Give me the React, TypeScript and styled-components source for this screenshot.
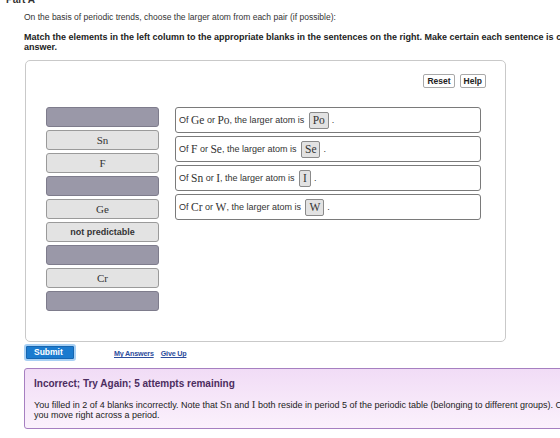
// App.tsx

import styled, { createGlobalStyle } from "styled-components";

const GlobalStyle = createGlobalStyle`
  html, body {
    margin: 0;
    padding: 0;
    background: #ffffff;
    overflow: hidden;
  }
  body {
    font-family: "Liberation Sans", Arial, sans-serif;
    color: #222;
  }
`;

const Page = styled.div`
  width: 560px;
  height: 438px;
  overflow: hidden;
  position: relative;
`;

const PartTitle = styled.div`
  margin-top: -6px;
  padding-left: 6px;
  font-size: 10px;
  line-height: 11px;
  font-weight: bold;
  color: #333;
`;

const Content = styled.div`
  padding-left: 24px;
`;

const Intro = styled.p`
  margin: 7px 0 0;
  font-size: 8.5px;
  line-height: 10px;
  color: #333;
  white-space: nowrap;
`;

const Instructions = styled.p`
  margin: 10px 0 0;
  font-size: 9px;
  line-height: 10px;
  font-weight: bold;
  color: #222;
  white-space: nowrap;
`;

const Panel = styled.div`
  margin-top: 8px;
  margin-left: 1px;
  width: 479px;
  height: 280px;
  border: 1px solid #c9c9c9;
  border-radius: 5px;
  box-sizing: content-box;
`;

const Toolbar = styled.div`
  display: flex;
  justify-content: flex-end;
  gap: 5px;
  padding: 13px 19px 0 0;
`;

const ToolButton = styled.button`
  height: 14px;
  padding: 0 3px;
  border: 1px solid #a9a9a9;
  border-radius: 2px;
  background: #fff;
  font-family: "Liberation Sans", Arial, sans-serif;
  font-size: 8.5px;
  font-weight: bold;
  color: #222;
  line-height: 12px;
`;

const Board = styled.div`
  display: grid;
  grid-template-columns: 113px 306px;
  column-gap: 16px;
  align-items: start;
  padding: 19px 0 0 20px;
`;

const Bank = styled.div`
  display: flex;
  flex-direction: column;
  gap: 3px;
`;

const Chip = styled.div<{ $empty?: boolean }>`
  height: 20px;
  box-sizing: border-box;
  border: 1px solid ${(p) => (p.$empty ? "#7e7c8c" : "#9a9a9a")};
  border-radius: 3px;
  background: ${(p) => (p.$empty ? "#9a98a8" : "#e3e3e3")};
  display: flex;
  align-items: center;
  justify-content: center;
  color: #333;
`;

const Elem = styled.span<{ $size?: number }>`
  font-family: "Liberation Serif", "Times New Roman", serif;
  font-size: ${(p) => p.$size ?? 11}px;
  color: #333;
`;

const ChipText = styled.span`
  font-size: 9px;
  font-weight: bold;
  color: #333;
`;

const Sentences = styled.div`
  display: flex;
  flex-direction: column;
  gap: 3px;
`;

const Sentence = styled.div`
  height: 26px;
  box-sizing: border-box;
  border: 1px solid #7a7a7a;
  border-radius: 3px;
  background: #fff;
  display: flex;
  align-items: center;
  padding-left: 3px;
  font-size: 9px;
  color: #333;
  white-space: pre;
`;

const Blank = styled.span`
  display: inline-flex;
  align-items: center;
  justify-content: center;
  height: 17px;
  box-sizing: border-box;
  padding: 0 3px;
  margin: 0 3px 0 2px;
  border: 1px solid #8a8a8a;
  border-radius: 2px;
  background: #e2e2e2;
`;

const Actions = styled.div`
  display: flex;
  align-items: center;
  margin-top: 2px;
`;

const SubmitButton = styled.button`
  width: 52px;
  height: 17px;
  padding: 0 0 0 8px;
  border: 2px solid #a8d0f4;
  border-radius: 3px;
  background: #1b7bcf;
  background-clip: padding-box;
  box-shadow: inset 0 0 0 1px #1565b0;
  color: #fff;
  font-family: "Liberation Sans", Arial, sans-serif;
  font-size: 8.5px;
  font-weight: bold;
  line-height: 13px;
  text-align: left;
`;

const Links = styled.div`
  display: flex;
  gap: 7px;
  margin-left: 38px;
  padding-top: 2px;
`;

const Link = styled.a`
  font-size: 7.2px;
  font-weight: bold;
  letter-spacing: -0.2px;
  color: #2d4d9c;
  text-decoration: underline;
`;

const Feedback = styled.div`
  margin-top: 7px;
  width: 620px;
  height: 51px;
  border: 1px solid #a67fc1;
  border-radius: 3px;
  background: linear-gradient(#f1dcf6, #fbf1fc);
  padding: 8px 0 0 9px;
  box-sizing: content-box;
`;

const FeedbackTitle = styled.div`
  font-size: 10px;
  line-height: 13px;
  font-weight: bold;
  color: #4c2d60;
`;

const FeedbackBody = styled.div`
  margin-top: 9px;
  font-size: 9px;
  line-height: 10px;
  color: #222;
  white-space: nowrap;
`;

const bank: { label?: string; text?: string }[] = [
  {},
  { label: "Sn" },
  { label: "F" },
  {},
  { label: "Ge" },
  { text: "not predictable" },
  {},
  { label: "Cr" },
  {},
];

const sentences = [
  { a: "Ge", b: "Po", answer: "Po" },
  { a: "F", b: "Se", answer: "Se" },
  { a: "Sn", b: "I", answer: "I" },
  { a: "Cr", b: "W", answer: "W" },
];

const App = () => {
  return (
    <Page>
      <GlobalStyle />
      <PartTitle>Part A</PartTitle>
      <Content>
        <Intro>
          On the basis of periodic trends, choose the larger atom from each pair
          (if possible):
        </Intro>
        <Instructions>
          Match the elements in the left column to the appropriate blanks in the
          sentences on the right. Make certain each sentence is complete before
          submitting your
          <br />
          answer.
        </Instructions>

        <Panel>
          <Toolbar>
            <ToolButton>Reset</ToolButton>
            <ToolButton>Help</ToolButton>
          </Toolbar>
          <Board>
            <Bank>
              {bank.map((item, i) => (
                <Chip key={i} $empty={!item.label && !item.text}>
                  {item.label && <Elem>{item.label}</Elem>}
                  {item.text && <ChipText>{item.text}</ChipText>}
                </Chip>
              ))}
            </Bank>
            <Sentences>
              {sentences.map((s) => (
                <Sentence key={s.a}>
                  {"Of "}
                  <Elem $size={11.5}>{s.a}</Elem>
                  {" or "}
                  <Elem $size={11.5}>{s.b}</Elem>
                  {", the larger atom is "}
                  <Blank>
                    <Elem $size={11.5}>{s.answer}</Elem>
                  </Blank>
                  {"."}
                </Sentence>
              ))}
            </Sentences>
          </Board>
        </Panel>

        <Actions>
          <SubmitButton>Submit</SubmitButton>
          <Links>
            <Link>My Answers</Link>
            <Link>Give Up</Link>
          </Links>
        </Actions>

        <Feedback>
          <FeedbackTitle>Incorrect; Try Again; 5 attempts remaining</FeedbackTitle>
          <FeedbackBody>
            You filled in 2 of 4 blanks incorrectly. Note that <Elem>Sn</Elem> and{" "}
            <Elem>I</Elem> both reside in period 5 of the periodic table (belonging
            to different groups). Consider how atomic radius changes as
            <br />
            you move right across a period.
          </FeedbackBody>
        </Feedback>
      </Content>
    </Page>
  );
};

export default App;
